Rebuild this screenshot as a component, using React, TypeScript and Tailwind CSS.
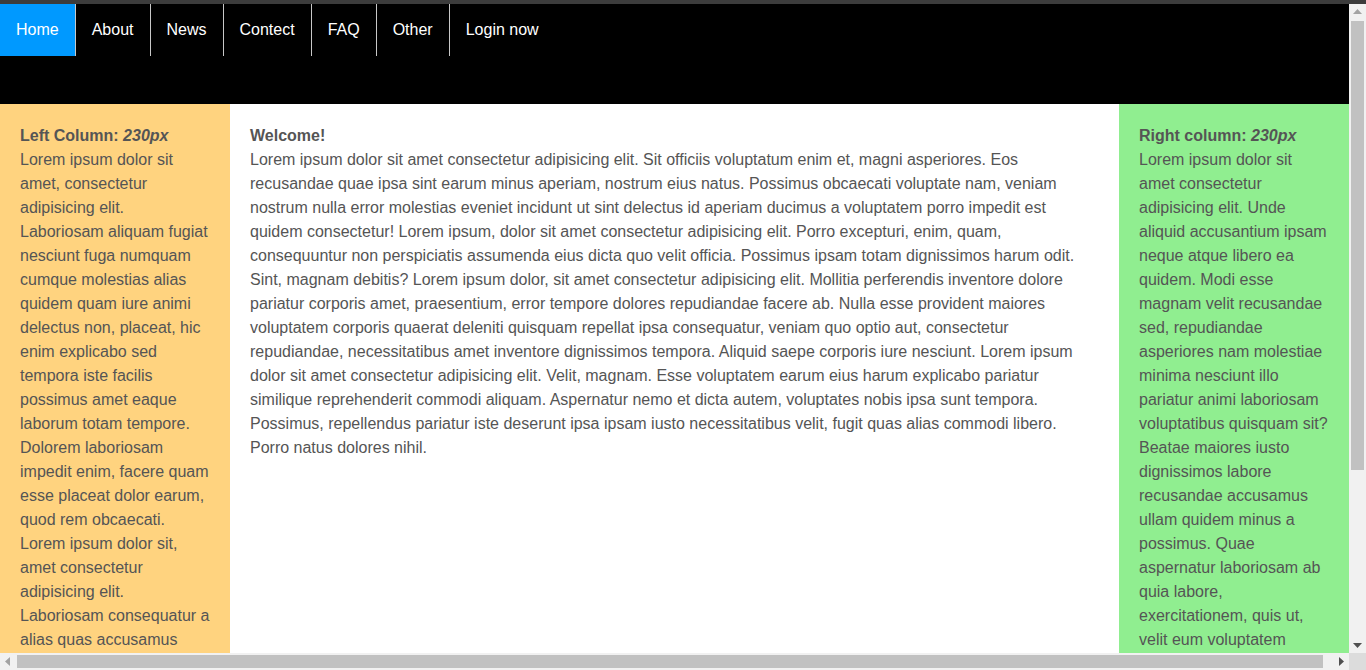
import React from 'react'

const navItems = ['Home', 'About', 'News', 'Contect', 'FAQ', 'Other', 'Login now']

const leftText =
  'Lorem ipsum dolor sit amet, consectetur adipisicing elit. Laboriosam aliquam fugiat nesciunt fuga numquam cumque molestias alias quidem quam iure animi delectus non, placeat, hic enim explicabo sed tempora iste facilis possimus amet eaque laborum totam tempore. Dolorem laboriosam impedit enim, facere quam esse placeat dolor earum, quod rem obcaecati. Lorem ipsum dolor sit, amet consectetur adipisicing elit. Laboriosam consequatur a alias quas accusamus nostrum voluptas eveniet, fugit dolorum quae sequi nihil magnam.'

const mainText =
  'Lorem ipsum dolor sit amet consectetur adipisicing elit. Sit officiis voluptatum enim et, magni asperiores. Eos recusandae quae ipsa sint earum minus aperiam, nostrum eius natus. Possimus obcaecati voluptate nam, veniam nostrum nulla error molestias eveniet incidunt ut sint delectus id aperiam ducimus a voluptatem porro impedit est quidem consectetur! Lorem ipsum, dolor sit amet consectetur adipisicing elit. Porro excepturi, enim, quam, consequuntur non perspiciatis assumenda eius dicta quo velit officia. Possimus ipsam totam dignissimos harum odit. Sint, magnam debitis? Lorem ipsum dolor, sit amet consectetur adipisicing elit. Mollitia perferendis inventore dolore pariatur corporis amet, praesentium, error tempore dolores repudiandae facere ab. Nulla esse provident maiores voluptatem corporis quaerat deleniti quisquam repellat ipsa consequatur, veniam quo optio aut, consectetur repudiandae, necessitatibus amet inventore dignissimos tempora. Aliquid saepe corporis iure nesciunt. Lorem ipsum dolor sit amet consectetur adipisicing elit. Velit, magnam. Esse voluptatem earum eius harum explicabo pariatur similique reprehenderit commodi aliquam. Aspernatur nemo et dicta autem, voluptates nobis ipsa sunt tempora. Possimus, repellendus pariatur iste deserunt ipsa ipsam iusto necessitatibus velit, fugit quas alias commodi libero. Porro natus dolores nihil.'

const rightText =
  'Lorem ipsum dolor sit amet consectetur adipisicing elit. Unde aliquid accusantium ipsam neque atque libero ea quidem. Modi esse magnam velit recusandae sed, repudiandae asperiores nam molestiae minima nesciunt illo pariatur animi laboriosam voluptatibus quisquam sit? Beatae maiores iusto dignissimos labore recusandae accusamus ullam quidem minus a possimus. Quae aspernatur laboriosam ab quia labore, exercitationem, quis ut, velit eum voluptatem dolorum nisi, tempora fugiat.'

function Arrow({ dir, dark }: { dir: 'up' | 'down' | 'left' | 'right'; dark?: boolean }) {
  const fill = dark ? '#505050' : '#a3a3a3'
  const pts = {
    up: '4,10 8.5,5 13,10',
    down: '4,7 8.5,12 13,7',
    left: '10,4 5,8.5 10,13',
    right: '7,4 12,8.5 7,13',
  }[dir]
  return (
    <div className="w-[17px] h-[17px] shrink-0 flex items-center justify-center">
      <svg width="17" height="17" viewBox="0 0 17 17">
        <polygon points={pts} fill={fill} />
      </svg>
    </div>
  )
}

export default function App() {
  return (
    <div className="w-[1366px] h-[670px] overflow-hidden flex flex-col bg-[#f1f1f1] font-['Liberation_Sans',Arial,sans-serif]">
      {/* window strip */}
      <div className="h-[4px] shrink-0 bg-[#3c3c3c]" />

      <div className="flex flex-1 min-h-0">
        {/* Page */}
        <div className="flex-1 min-w-0 flex flex-col bg-white overflow-hidden">
          {/* Header */}
          <div className="h-[100px] shrink-0 bg-black">
            <ul className="flex h-[52px]">
              {navItems.map((item, idx) => (
                <li
                  key={item}
                  className={`flex items-center px-4 text-base text-white ${
                    idx === 0 ? 'bg-[#0099ff]' : ''
                  } ${idx < navItems.length - 1 ? 'border-r border-[#c8c8c8]' : ''}`}
                >
                  {item}
                </li>
              ))}
            </ul>
          </div>

          {/* Columns */}
          <div className="flex flex-1 min-h-0 text-base leading-6 text-[#555]">
            <div className="w-[230px] shrink-0 bg-[#ffd37f] p-5">
              <b>
                Left Column: <i>230px</i>
              </b>
              <br />
              {leftText}
            </div>
            <div className="flex-1 min-w-0 p-5">
              <b>Welcome!</b>
              <br />
              {mainText}
            </div>
            <div className="w-[230px] shrink-0 bg-[#90ee90] p-5">
              <b>
                Right column: <i>230px</i>
              </b>
              <br />
              {rightText}
            </div>
          </div>
        </div>

        {/* Vertical scrollbar */}
        <div className="w-[17px] shrink-0 flex flex-col bg-[#f1f1f1]">
          <Arrow dir="up" />
          <div className="flex-1 px-[2px]">
            <div className="h-[449px] bg-[#c1c1c1]" />
          </div>
          <Arrow dir="down" dark />
        </div>
      </div>

      {/* Horizontal scrollbar */}
      <div className="h-[17px] shrink-0 flex">
        <div className="flex-1 flex bg-[#f1f1f1]">
          <Arrow dir="left" />
          <div className="flex-1 py-[2px] pr-[9px]">
            <div className="h-full bg-[#c1c1c1]" />
          </div>
          <Arrow dir="right" dark />
        </div>
        <div className="w-[17px] bg-[#dcdcdc]" />
      </div>
    </div>
  )
}
